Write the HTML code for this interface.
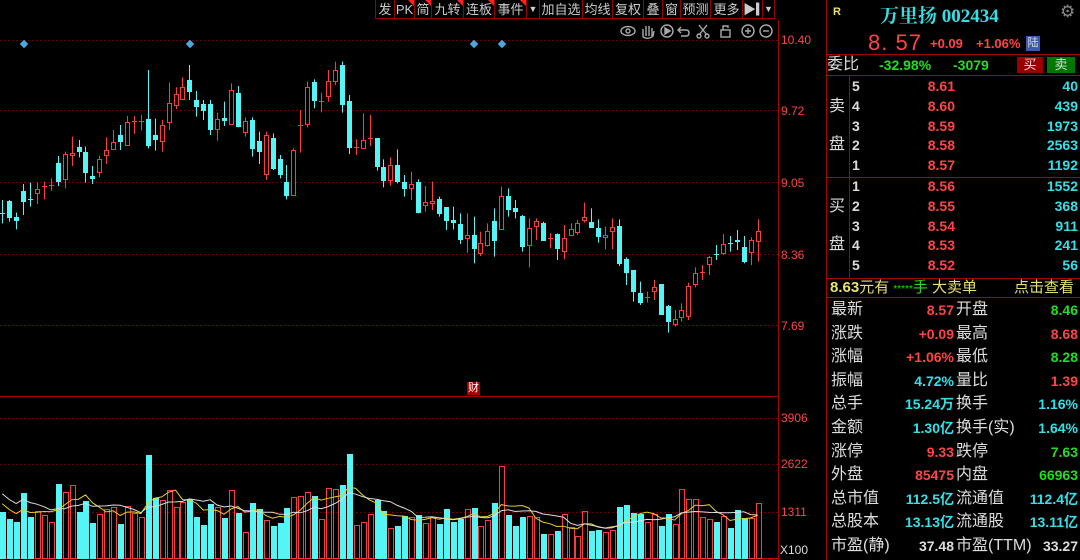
<!DOCTYPE html>
<html><head><meta charset="utf-8"><style>
*{margin:0;padding:0;box-sizing:border-box}
body{width:1080px;height:560px;background:#000;overflow:hidden;position:relative;font-family:"Liberation Sans","Noto Sans CJK SC",sans-serif;color:#ddd}
.a{position:absolute;white-space:nowrap}
.tb{position:absolute;top:0;height:19px;font-size:13px;line-height:19px;color:#ccc;text-align:center;border-right:1px solid #900}
.tri{position:absolute;right:0;top:0;width:0;height:0;border-left:6px solid transparent;border-top:6px solid #f22}
.r{color:#ff4444}.g{color:#22dd22}.c{color:#33e0e8}.w{color:#ddd}.y{color:#e8e070}
.lb{position:absolute;font-size:16px;color:#ddd;line-height:20px}
.v{position:absolute;font-size:14px;text-align:right;line-height:20px;font-weight:bold}
.hl{position:absolute;left:826px;width:254px;height:1px;background:#a00}
</style></head><body>
<svg id="s" width="1080" height="560" style="position:absolute;left:0;top:0"></svg>

<div class="a" style="left:375px;top:0;width:400px;height:19px;border-bottom:1px solid #900;border-left:1px solid #900"></div>
<div class="tb" style="left:376px;width:19px">发</div>
<div class="tb" style="left:395px;width:20px">PK<i class="tri"></i></div>
<div class="tb" style="left:415px;width:17px">简<i class="tri"></i></div>
<div class="tb" style="left:432px;width:32px">九转<i class="tri"></i></div>
<div class="tb" style="left:464px;width:31px">连板<i class="tri"></i></div>
<div class="tb" style="left:495px;width:32px">事件<i class="tri"></i></div>
<div class="tb" style="left:527px;width:13px;font-size:9px">▼</div>
<div class="tb" style="left:540px;width:43px">加自选</div>
<div class="tb" style="left:583px;width:30px">均线</div>
<div class="tb" style="left:613px;width:31px">复权</div>
<div class="tb" style="left:644px;width:19px">叠</div>
<div class="tb" style="left:663px;width:18px">窗</div>
<div class="tb" style="left:681px;width:30px">预测</div>
<div class="tb" style="left:711px;width:32px">更多</div>
<div class="tb" style="left:743px;width:20px">▶▎</div>
<div class="tb" style="left:763px;width:12px;font-size:9px">▼</div>

<svg class="a" style="left:618px;top:22px" width="160" height="18" fill="none" stroke="#aaa" stroke-width="1.4">
<ellipse cx="10" cy="9" rx="7" ry="4.5"/><circle cx="10" cy="9" r="2"/>
<path d="M25 15 V7 M28 14 V4 M31 14 V4 M34 14 V6 M25 15 Q30 18 35 14 L36 9"/>
<circle cx="49" cy="9" r="6"/><path d="M47 6 L52 9 L47 12Z" fill="#aaa"/>
<path d="M63 5 L60 8 L63 11 M60 8 H68 Q71 8 71 11 Q71 14 68 14 H63"/>
<path d="M81 3 L89 13 M89 3 L81 13"/><circle cx="81" cy="14" r="2"/><circle cx="89" cy="14" r="2"/>
<rect x="103" y="8" width="9" height="7"/><path d="M105 8 V4 H110 V6"/>
<circle cx="130" cy="9" r="6"/><path d="M127 9 H133 M130 6 V12"/>
<circle cx="148" cy="9" r="6"/><path d="M145 9 H151"/>
</svg>

<div class="a r" style="left:781px;top:33px;font-size:12px">10.40</div>
<div class="a r" style="left:781px;top:104px;font-size:12px">9.72</div>
<div class="a r" style="left:781px;top:176px;font-size:12px">9.05</div>
<div class="a r" style="left:781px;top:248px;font-size:12px">8.36</div>
<div class="a r" style="left:781px;top:319px;font-size:12px">7.69</div>
<div class="a r" style="left:781px;top:411px;font-size:12px">3906</div>
<div class="a r" style="left:781px;top:457px;font-size:12px">2622</div>
<div class="a r" style="left:781px;top:505px;font-size:12px">1311</div>
<div class="a w" style="left:780px;top:543px;font-size:12px">X100</div>
<div class="a" style="left:467px;top:382px;font-size:11px;color:#fff;background:#a00;line-height:13px;padding:0 1px">财</div>

<div class="a" style="left:826px;top:0;width:1px;height:560px;background:#a00"></div>
<div class="a y" style="left:833px;top:6px;font-size:11px;font-weight:bold">R</div>
<div class="a c" style="left:880px;top:1px;font-size:19px;font-weight:bold;font-family:'Liberation Serif','Noto Serif CJK SC',serif">万里扬 002434</div>
<div class="a" style="left:1060px;top:2px;font-size:17px;color:#888">⚙</div>
<div class="a r" style="left:868px;top:30px;font-size:22px;letter-spacing:1px">8. 57</div>
<div class="a r" style="left:930px;top:36px;font-size:13px;font-weight:bold">+0.09</div>
<div class="a r" style="left:976px;top:36px;font-size:13px;font-weight:bold">+1.06%</div>
<div class="a" style="left:1026px;top:36px;width:14px;height:15px;background:#3b5bb0;color:#ddd;font-size:11px;text-align:center;line-height:15px">陆</div>
<div class="hl" style="top:54px"></div>
<div class="lb" style="left:827px;top:55px">委比</div>
<div class="a g" style="left:879px;top:57px;font-size:14px;font-weight:bold">-32.98%</div>
<div class="a g" style="left:953px;top:57px;font-size:14px;font-weight:bold">-3079</div>
<div class="a" style="left:1017px;top:57px;width:26px;height:16px;background:#900;color:#ddd;font-size:13px;text-align:center;line-height:16px">买</div>
<div class="a" style="left:1047px;top:57px;width:28px;height:16px;background:#070;color:#ddd;font-size:13px;text-align:center;line-height:16px">卖</div>
<div class="hl" style="top:75px"></div>
<div class="a" style="left:849px;top:75px;width:1px;height:203px;background:#a00"></div>
<div class="lb" style="left:829px;top:97px">卖</div><div class="lb" style="left:829px;top:135px">盘</div>
<div class="hl" style="top:177px"></div>
<div class="lb" style="left:829px;top:197px">买</div><div class="lb" style="left:829px;top:235px">盘</div>
<div id="ob"></div>
<div class="hl" style="top:278px"></div>
<div class="a y" style="left:830px;top:278px;font-size:15px;line-height:20px"><b>8.63</b>元有 <span class="g" style="font-size:10px">*****</span><span class="g">手</span> 大卖单</div>
<div class="a y" style="left:1014px;top:278px;font-size:15px;line-height:20px">点击查看</div>
<div class="hl" style="top:297px"></div>
<div id="st"></div>

<script>
var S='';
function L(x1,y1,x2,y2,c,d){S+='<line x1="'+x1+'" y1="'+y1+'" x2="'+x2+'" y2="'+y2+'" stroke="'+c+'" stroke-width="1"'+(d?' stroke-dasharray="'+d+'"':'')+' shape-rendering="crispEdges"/>';}
[40.5,110.5,182.5,254.5,325.5].forEach(function(y){L(0,y,778,y,'#6a0000','2 2')});
[418.5,464.5,512.5].forEach(function(y){L(0,y,778,y,'#6a0000','2 2')});
L(0,396.5,778,396.5,'#a00');L(0,558.5,778,558.5,'#c00');
L(778.5,20,778.5,560,'#a00');
[24,190,474,502].forEach(function(x){S+='<rect x="'+(x-3)+'" y="41" width="6" height="6" fill="#4aa8e0" transform="rotate(45 '+x+' 44)"/>'});
var A=[['c',520,520,480,550],['c',483,535,480,545],['c',530,542,518,568],['c',452,485,432,525],['c',477,477,428,500],['r',446,462,428,492],['r',437,437,425,478],['r',435,435,415,452],['c',370,425,348,438],['r',342,420,335,445],['r',340,347,290,378],['c',322,335,300,352],['c',337,400,320,428],['c',408,418,378,432],['r',357,400,347,412],['r',330,347,292,372],['r',305,330,270,330],['c',285,305,255,330],['r',247,317,228,317],['r',243,243,228,282],['r',242,242,225,272],['c',236,317,90,325],['c',284,300,236,332],['r',256,307,240,335],['r',188,250,128,270],['r',162,197,142,207],['r',142,180,112,180],['c',120,157,75,180],['c',180,200,153,230],['c',192,212,180,240],['c',192,270,180,285],['r',238,270,218,302],['c',235,243,185,258],['r',150,255,130,255],['c',158,260,138,262],['r',243,278,232,290],['c',240,327,232,350],['c',303,335,275,372],['r',285,405,275,420],['c',295,387,280,390],['c',357,405,345,415],['c',425,467,375,478],['r',330,467,325,467],['r',255,255,210,338],['r',140,255,125,262],['c',125,182,118,205],['r',183,183,158,217],['r',123,170,90,185],['r',90,125,65,135],['c',75,195,65,218],['c',182,325,165,342],['r',320,320,298,345],['r',300,327,220,327],['r',293,293,225,318],['c',295,380,295,392],['c',380,422,358,442],['r',375,422,352,437],['c',375,425,328,430]];
var B=[['c',95,118,75,140],['r',102,118,65,150],['c',97,188,88,190],['r',157,168,108,185],['r',152,162,95,180],['c',148,192,140,200],['c',172,212,172,240],['c',210,218,170,238],['c',222,270,190,282],['r',256,268,190,308],['c',256,296,200,340],['r',280,312,245,318],['r',243,287,220,290],['c',213,272,175,320],['r',137,240,110,240],['c',137,180,115,200],['c',175,185,150,205],['c',198,290,195,305],['r',235,287,205,352],['r',213,232,205,270],['c',218,272,215,272],['r',265,265,250,295],['c',252,298,250,330],['r',265,307,225,328],['r',238,257,220,257],['r',220,248,210,255],['r',202,213,158,218],['c',215,233,175,233],['c',235,260,208,278],['r',255,265,230,298],['r',230,247,205,298],['c',228,342,208,348],['c',328,370,322,405],['c',360,425,360,455],['c',430,458,395,465],['r',440,440,425,458],['r',410,425,390,450],['c',403,495,403,495],['c',468,515,465,548],['r',508,525,480,530],['r',480,505,460,515],['r',408,500,398,510],['r',368,405,352,412],['r',365,365,345,390],['r',320,345,318,375],['c',311,311,285,330],['r',283,313,252,315],['c',280,280,258,305],['c',270,277,240,300],['c',292,335,258,340],['r',270,310,262,345],['r',243,277,208,335]];
var C=[];A.forEach(function(a){C.push([a[0],40+a[1]/3,40+a[2]/3,40+a[3]/3,40+a[4]/3])});
B.forEach(function(a){C.push([a[0],150+a[1]/3,150+a[2]/3,150+a[3]/3,150+a[4]/3])});
var RED='#ff3c3c',CY='#55f5f5';
C.forEach(function(k,i){var x=Math.round(2.3+i*6.93),col=k[0]=='r'?RED:CY;
 var bt=Math.round(k[1]),bb=Math.round(k[2]);
 S+='<line x1="'+(x+.5)+'" y1="'+k[3]+'" x2="'+(x+.5)+'" y2="'+k[4]+'" stroke="'+col+'"/>';
 if(bb-bt<2){S+='<rect x="'+(x-2)+'" y="'+bt+'" width="5" height="1" fill="'+col+'"/>';}
 else if(k[0]=='r'){S+='<rect x="'+(x-1.5)+'" y="'+(bt+.5)+'" width="4" height="'+(bb-bt-1)+'" fill="#000" stroke="'+col+'"/>';}
 else S+='<rect x="'+(x-2)+'" y="'+bt+'" width="5" height="'+(bb-bt)+'" fill="'+col+'"/>';});
var V1=[365,388,395,308,382,362,376,397,282,306,286,367,332,400,373,357,350,403,348,370,382,196,325,330,300,352,337,327,380,406,342,352,385,300,368,427,339,357,391,409,400,353,321,318,306,318,388,295,297,285,193,406,395,373,330,362,414,408];
var V2=[378,380,375,400,382,403,358,395,387,358,355,408,390,338,228,376,409,382,377,380,433,433,424,373,412,438,362,424,420,426,420,350,344,370,372,395,373,408,373,403,297,327,327,382,388,397,378,413,361,383,383,339];
var V=V1.concat(V2).map(function(z){return 390+z/3});
V.forEach(function(y,i){var x=Math.round(2.3+i*6.93),col=C[i][0]=='r'?RED:CY;
 if(C[i][0]=='r')S+='<rect x="'+(x-1.5)+'" y="'+(Math.round(y)+.5)+'" width="5" height="'+(558-Math.round(y))+'" fill="none" stroke="'+col+'"/>';
 else S+='<rect x="'+(x-2)+'" y="'+Math.round(y)+'" width="6" height="'+(559-Math.round(y))+'" fill="'+col+'"/>';});
function ma(n,c){var p='';for(var i=0;i<V.length;i++){var s=0,m=0;for(var j=Math.max(0,i-n+1);j<=i;j++){s+=558-V[j];m++;}var y=558-s/m;if(i<n-1)y=558-(s/m+(n-1-i)*2);p+=(i?'L':'M')+(2.3+i*6.93).toFixed(1)+' '+y.toFixed(1);}S+='<path d="'+p+'" fill="none" stroke="'+c+'" stroke-width="1"/>';}
ma(5,'#e8d020');ma(10,'#dddddd');
document.getElementById('s').innerHTML=S;
var ob='',sp=[['5','8.61','40'],['4','8.60','439'],['3','8.59','1973'],['2','8.58','2563'],['1','8.57','1192']],bp=[['1','8.56','1552'],['2','8.55','368'],['3','8.54','911'],['4','8.53','241'],['5','8.52','56']];
function row(a,y){ob+='<div class="v w" style="left:852px;top:'+y+'px;text-align:left">'+a[0]+'</div><div class="v r" style="left:880px;width:75px;top:'+y+'px">'+a[1]+'</div><div class="v c" style="left:1000px;width:78px;top:'+y+'px">'+a[2]+'</div>';}
sp.forEach(function(a,i){row(a,76+i*19.8)});bp.forEach(function(a,i){row(a,176+i*19.8)});
document.getElementById('ob').innerHTML=ob;
var st=[['最新','8.57','r','开盘','8.46','g'],['涨跌','+0.09','r','最高','8.68','r'],['涨幅','+1.06%','r','最低','8.28','g'],['振幅','4.72%','c','量比','1.39','r'],['总手','15.24万','c','换手','1.16%','c'],['金额','1.30亿','c','换手(实)','1.64%','c'],['涨停','9.33','r','跌停','7.63','g'],['外盘','85475','r','内盘','66963','g'],['总市值','112.5亿','c','流通值','112.4亿','c'],['总股本','13.13亿','c','流通股','13.11亿','c'],['市盈(静)','37.48','w','市盈(TTM)','33.27','w']];
var h='';st.forEach(function(a,i){var y=300+i*23.6;
h+='<div class="lb" style="left:831px;top:'+y+'px">'+a[0]+'</div><div class="v '+a[2]+'" style="left:870px;width:84px;top:'+y+'px">'+a[1]+'</div><div class="lb" style="left:956px;top:'+y+'px">'+a[3]+'</div><div class="v '+a[5]+'" style="left:1000px;width:78px;top:'+y+'px">'+a[4]+'</div>';});
document.getElementById('st').innerHTML=h;
</script>
</body></html>
